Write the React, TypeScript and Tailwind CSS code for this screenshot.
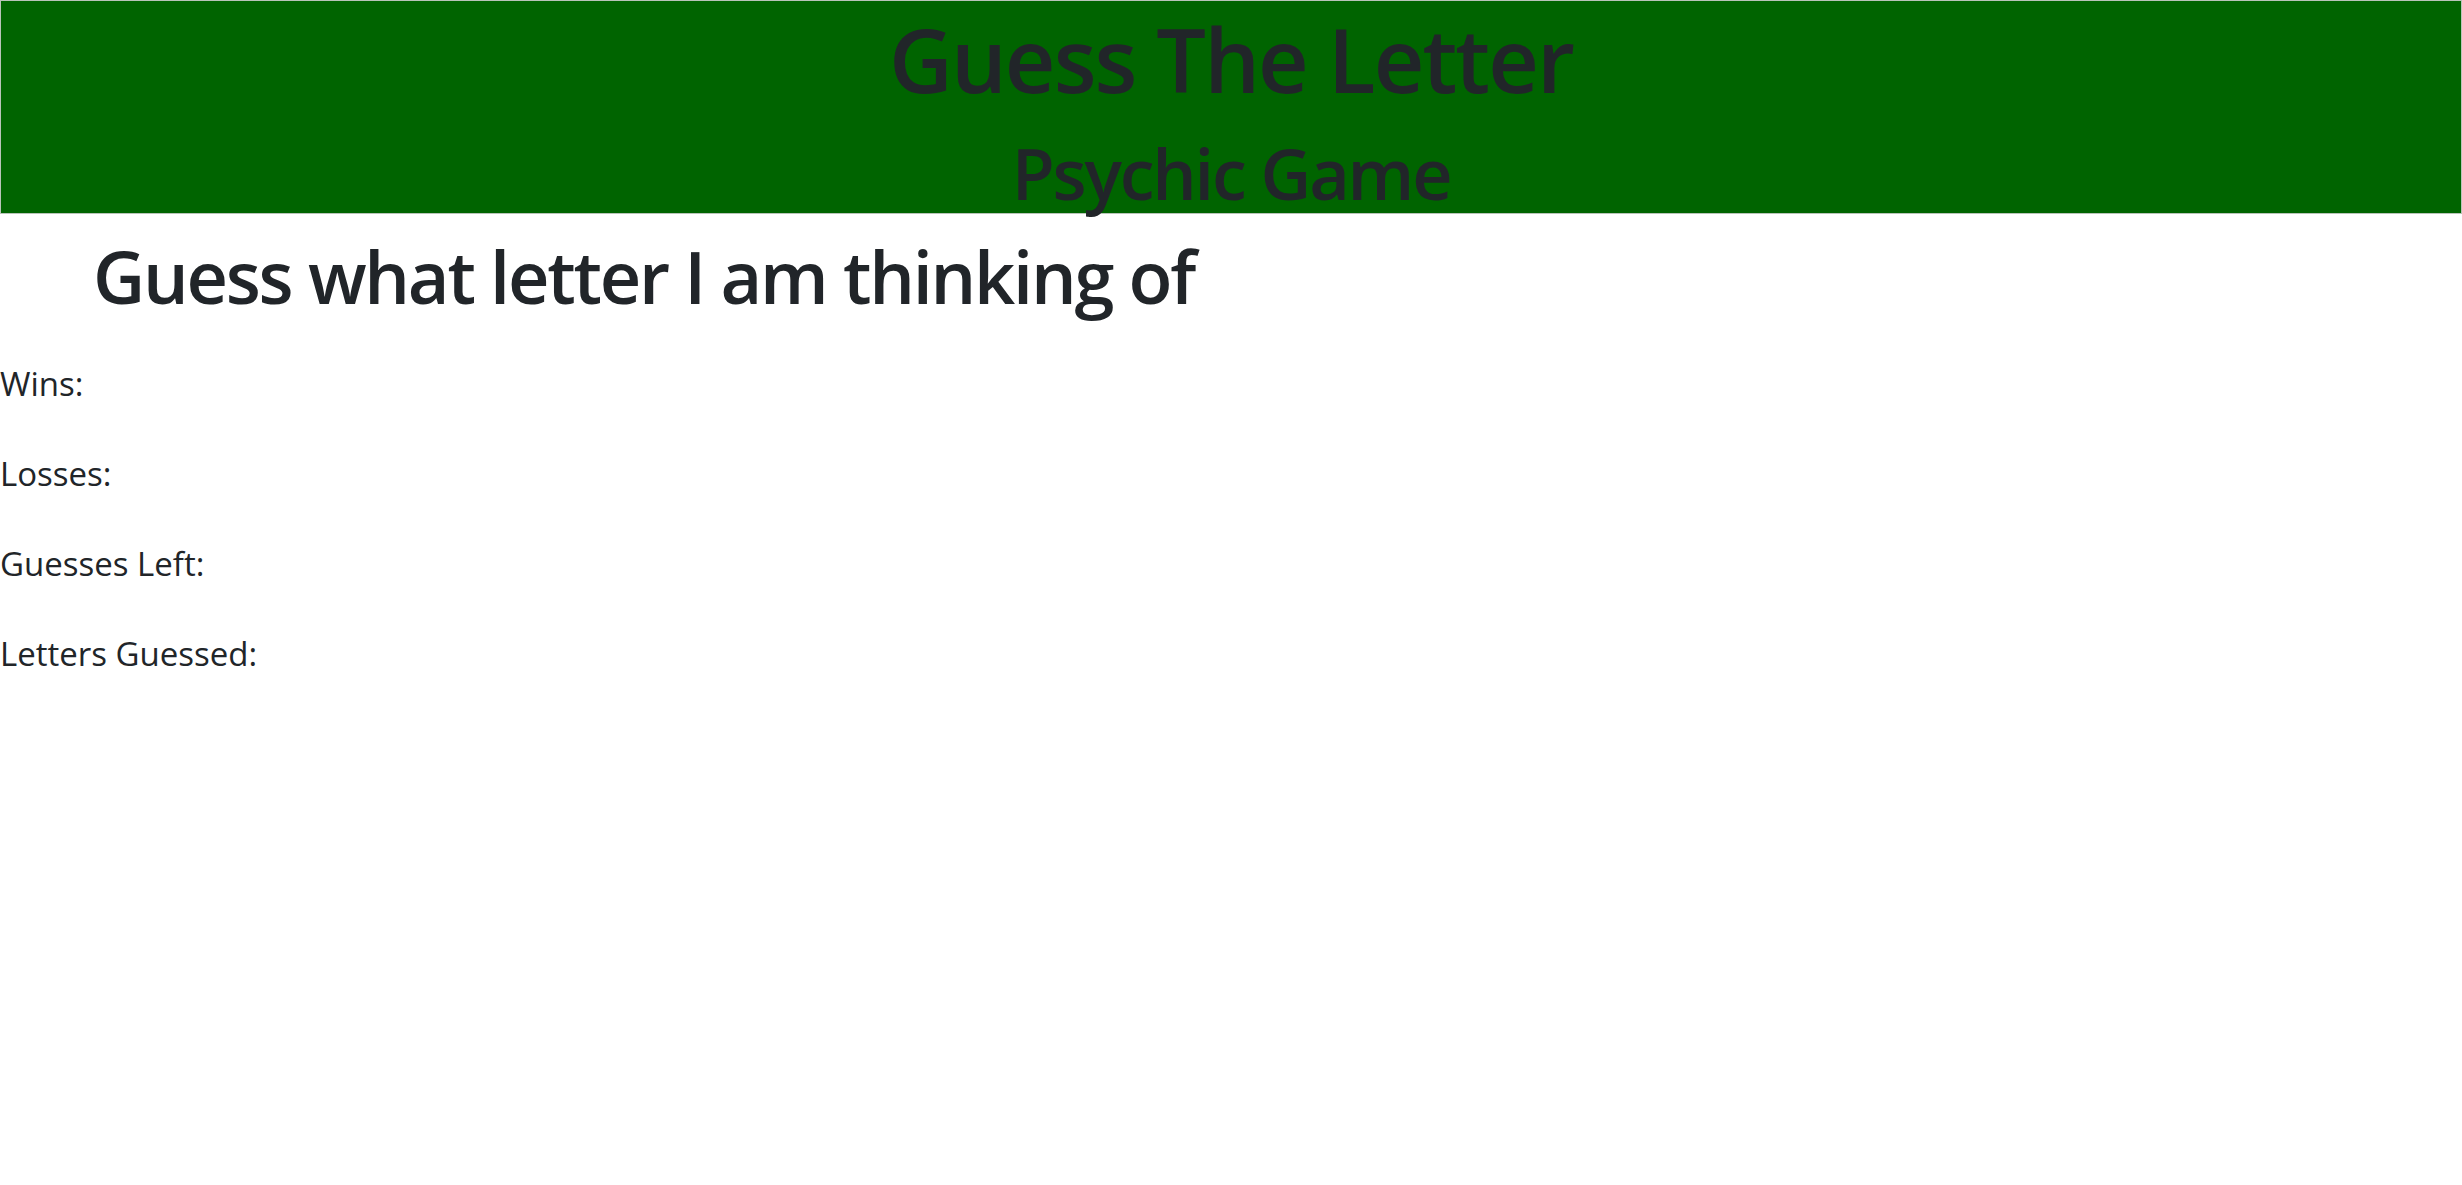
const stats = ["Wins:", "Losses:", "Guesses Left:", "Letters Guessed:"]

const App = () => {
  return (
    <div className="min-h-screen bg-white font-['Open_Sans',sans-serif] text-[#212529]">
      <header className="flex flex-col items-center border border-[#b9c4b9] bg-[#006400] pt-[8px]">
        <h1 className="text-[88px] font-semibold leading-[100px] tracking-[-0.022em]">Guess The Letter</h1>
        <h2 className="mt-[24px] text-[70px] font-semibold leading-[80px] tracking-[-0.031em]">Psychic Game</h2>
      </header>

      <h2 className="mt-[17px] pl-[93px] text-[72px] font-semibold leading-[90px] tracking-[-0.031em]">
        Guess what letter I am thinking of
      </h2>

      <div className="mt-[39px] flex flex-col gap-[42px]">
        {stats.map((label) => (
          <p key={label} className="text-[33px] leading-[48px]">
            {label}
          </p>
        ))}
      </div>
    </div>
  )
}

export default App
